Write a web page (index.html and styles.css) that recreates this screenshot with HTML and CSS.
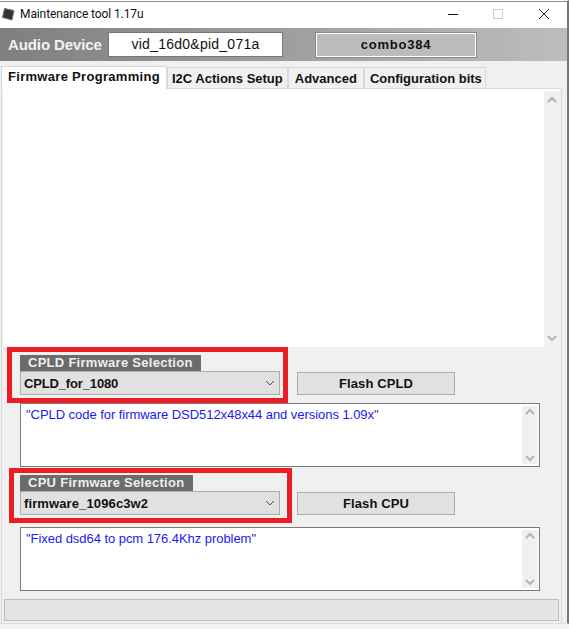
FILE: index.html
```html
<!DOCTYPE html>
<html lang="en">
<head>
  <meta charset="UTF-8">
  <meta name="viewport" content="width=device-width, initial-scale=1.0">
  <title>Maintenance tool 1.17u</title>
  <link rel="stylesheet" href="styles.css">
</head>
<body>
  <div class="window">
    <div class="titlebar">
      <svg class="app-icon" width="16" height="16" viewBox="0 0 16 16">
        <path d="M4.5 2.5 L14 4.5 L12 14 L2.5 11.5 Z" fill="#333" stroke="#777" stroke-width="1"/>
      </svg>
      <span class="title-text">Maintenance tool 1.17u</span>
      <div class="win-controls">
        <svg width="46" height="26" viewBox="0 0 46 26"><path d="M19 12.5 H29" stroke="#111" stroke-width="1"/></svg>
        <svg width="46" height="26" viewBox="0 0 46 26"><rect x="18.5" y="7.5" width="9" height="9" fill="none" stroke="#ccc"/></svg>
        <svg width="46" height="26" viewBox="0 0 46 26"><path d="M18 7 L28 17 M28 7 L18 17" stroke="#222" stroke-width="1"/></svg>
      </div>
    </div>

    <div class="toolbar">
      <span class="device-label">Audio Device</span>
      <div class="device-id">vid_16d0&amp;pid_071a</div>
      <div class="device-name">combo384</div>
    </div>

    <div class="tabs">
      <div class="tab active">Firmware Programming</div>
      <div class="tab">I2C Actions Setup</div>
      <div class="tab tab-wide">Advanced</div>
      <div class="tab tab-last">Configuration bits</div>
    </div>

    <div class="panel">
      <div class="log">
        <div class="scrollbar">
          <svg width="16" height="9" viewBox="0 0 16 9"><path d="M4 7 L8 3 L12 7" class="chev"/></svg>
          <svg width="16" height="9" viewBox="0 0 16 9"><path d="M4 2 L8 6 L12 2" class="chev"/></svg>
        </div>
      </div>

      <div class="group group-cpld">
        <div class="group-title title-cpld">CPLD Firmware Selection</div>
        <div class="group-row">
          <div class="select">
            <span>CPLD_for_1080</span>
            <svg width="10" height="6" viewBox="0 0 10 6"><path d="M1 1 L5 5 L9 1" class="arrow"/></svg>
          </div>
          <div class="flash-btn">Flash CPLD</div>
        </div>
        <div class="red-frame frame-cpld"></div>
      </div>

      <div class="notes">
        <span>"CPLD code for firmware DSD512x48x44 and versions 1.09x"</span>
        <div class="scrollbar">
          <svg width="16" height="9" viewBox="0 0 16 9"><path d="M4 7 L8 3 L12 7" class="chev"/></svg>
          <svg width="16" height="9" viewBox="0 0 16 9"><path d="M4 2 L8 6 L12 2" class="chev"/></svg>
        </div>
      </div>

      <div class="group group-cpu">
        <div class="group-title title-cpu">CPU Firmware Selection</div>
        <div class="group-row">
          <div class="select select-fw">
            <span>firmware_1096c3w2</span>
            <svg width="10" height="6" viewBox="0 0 10 6"><path d="M1 1 L5 5 L9 1" class="arrow"/></svg>
          </div>
          <div class="flash-btn">Flash CPU</div>
        </div>
        <div class="red-frame frame-cpu"></div>
      </div>

      <div class="notes">
        <span>"Fixed dsd64 to pcm 176.4Khz problem"</span>
        <div class="scrollbar">
          <svg width="16" height="9" viewBox="0 0 16 9"><path d="M4 7 L8 3 L12 7" class="chev"/></svg>
          <svg width="16" height="9" viewBox="0 0 16 9"><path d="M4 2 L8 6 L12 2" class="chev"/></svg>
        </div>
      </div>

      <div class="statusbar"></div>
    </div>
  </div>
</body>
</html>
```

FILE: styles.css
```css
* {
  box-sizing: border-box;
}

html, body {
  margin: 0;
  padding: 0;
  background: #f4f4f4;
}

.window {
  width: 569px;
  height: 624px;
  background: #f0f0f0;
  border-top: 1px solid #fff;
  border-right: 2px solid #777;
  border-bottom: 1px solid #dcdcdc;
  font-family: "Liberation Sans", Arial, sans-serif;
  overflow: hidden;
}

.titlebar {
  height: 27px;
  display: flex;
  align-items: center;
  background: #fff;
  border-top: 1px solid #8c8c8c;
  padding-bottom: 2px;
}

.app-icon {
  flex-shrink: 0;
}

.title-text {
  margin-left: 4px;
  font-family: Roboto, sans-serif;
  font-size: 12px;
  letter-spacing: -0.1px;
  color: #111;
}

.win-controls {
  margin-left: auto;
  margin-top: 2px;
  display: flex;
}

.toolbar {
  height: 33px;
  display: flex;
  align-items: center;
  padding-left: 8px;
  background: linear-gradient(to right, #7f7f7f, #bdbdbd);
}

.device-label {
  width: 100px;
  color: #f2f2f2;
  font-size: 15px;
  font-weight: bold;
  letter-spacing: -0.1px;
}

.device-id {
  width: 175px;
  height: 25px;
  background: #fff;
  border: 1px solid #777;
  text-align: center;
  font-size: 14px;
  line-height: 23px;
  letter-spacing: 0.25px;
  color: #111;
}

.device-name {
  width: 160px;
  height: 24px;
  margin-left: 33px;
  background: #bcbcbc;
  border: 1px solid #fff;
  outline: 1px solid #8a8a8a;
  outline-offset: -0.5px;
  text-align: center;
  font-size: 13px;
  font-weight: bold;
  line-height: 22px;
  letter-spacing: 0.8px;
  color: #111;
}

.tabs {
  height: 27px;
  display: flex;
  align-items: flex-end;
  padding-left: 1px;
}

.tab {
  height: 21px;
  padding: 0 4px;
  background: #f0f0f0;
  border: 1px solid #d9d9d9;
  border-bottom: none;
  font-size: 13px;
  font-weight: bold;
  line-height: 21px;
  color: #111;
  white-space: nowrap;
}

.tab-wide {
  padding: 0 6px;
}

.tab-last {
  padding: 0 3px 0 5px;
}

.tab.active {
  width: 166px;
  height: 23px;
  padding: 0 6px;
  margin-bottom: -1px;
  position: relative;
  background: #fff;
  line-height: 20px;
  letter-spacing: 0.3px;
}

.panel {
  width: 561px;
  height: 536px;
  margin-left: 1px;
  border: 1px solid #d9d9d9;
  padding-left: 1px;
}

.log {
  width: 557px;
  height: 258px;
  background: #fff;
  display: flex;
  justify-content: flex-end;
  padding: 2px 0 0;
}

.scrollbar {
  width: 16px;
  display: flex;
  flex-direction: column;
  justify-content: space-between;
  flex-shrink: 0;
  padding: 4px 0;
  background: #f0f0f0;
}

.scrollbar svg {
  display: block;
}

.chev {
  fill: none;
  stroke: #b4b4b4;
  stroke-width: 2;
}

.group {
  position: relative;
  margin-left: 17px;
  width: 520px;
}

.group-cpld {
  height: 56px;
  padding-top: 8px;
}

.group-cpu {
  height: 60px;
  padding-top: 8px;
}

.group-title {
  height: 16px;
  padding-left: 8px;
  background: #6b6b6b;
  color: #eee;
  font-size: 13px;
  font-weight: bold;
  line-height: 16px;
  letter-spacing: 0.28px;
  white-space: nowrap;
}

.title-cpld {
  width: 181px;
}

.title-cpu {
  width: 173px;
}

.group-row {
  display: flex;
  align-items: flex-end;
}

.select {
  width: 260px;
  height: 24px;
  display: flex;
  align-items: center;
  justify-content: space-between;
  padding: 0 4px 0 3px;
  background: #e1e1e1;
  border: 1px solid #adadad;
  font-size: 13px;
  font-weight: bold;
  letter-spacing: -0.15px;
  color: #111;
}

.select-fw {
  letter-spacing: 0.12px;
}

.arrow {
  fill: none;
  stroke: #555;
  stroke-width: 1;
}

.flash-btn {
  width: 158px;
  height: 23px;
  margin-left: 17px;
  background: #e1e1e1;
  border: 1px solid #adadad;
  text-align: center;
  font-size: 13px;
  font-weight: bold;
  line-height: 21px;
  letter-spacing: 0.1px;
  color: #111;
}

/* red annotation boxes drawn over the form */
.red-frame {
  position: absolute;
  border: 5px solid #ed1c24;
  pointer-events: none;
}

.frame-cpld {
  left: -13px;
  top: 0;
  width: 281px;
  height: 56px;
}

.frame-cpu {
  left: -11px;
  top: 1px;
  width: 283px;
  height: 55px;
}

.notes {
  width: 520px;
  height: 64px;
  margin-left: 17px;
  display: flex;
  justify-content: space-between;
  background: #fff;
  border: 1px solid #7a7a7a;
  padding: 2px 1px 2px 5px;
  font-size: 13px;
  line-height: 18px;
  letter-spacing: -0.05px;
  color: #1a1aee;
}

.notes .scrollbar {
  padding: 1px 0;
}

.statusbar {
  width: 555px;
  height: 22px;
  margin-top: 8px;
  margin-left: 1px;
  background: #e5e5e5;
  border: 1px solid #bcbcbc;
}
```
